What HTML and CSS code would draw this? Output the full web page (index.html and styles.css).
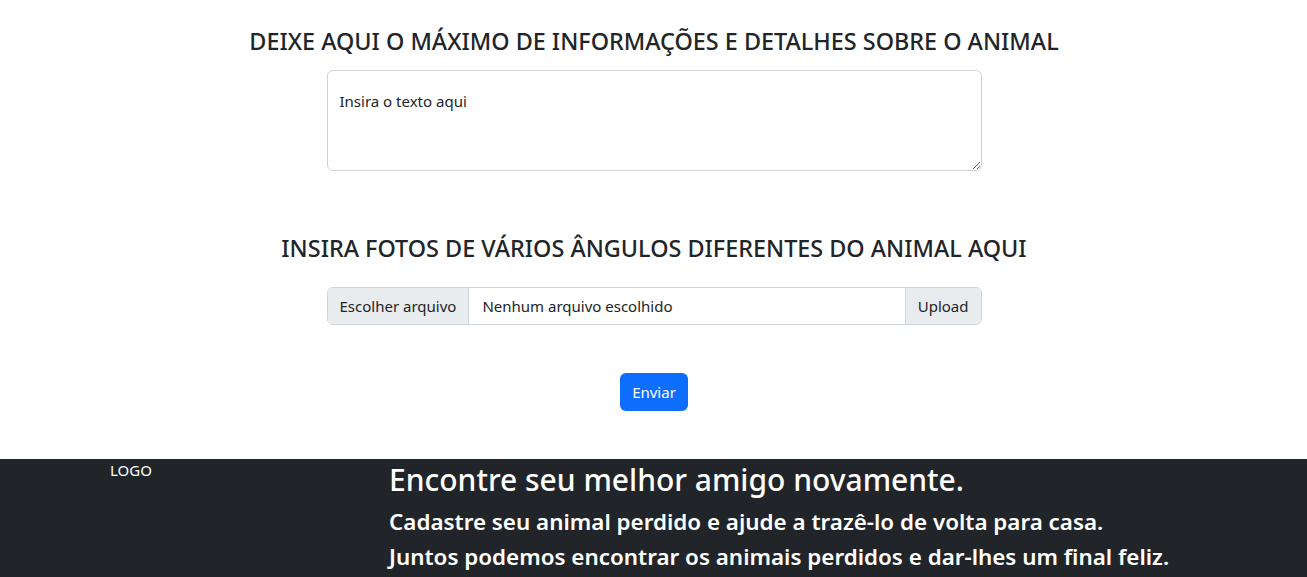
FILE: index.html
```html
<!DOCTYPE html>
<html lang="pt-BR">
<head>
<meta charset="utf-8">
<title>Cadastro de animal</title>
<link rel="stylesheet" href="styles.css">
</head>
<body>
<main class="content">
  <section class="block block-details">
    <h4 class="section-title">DEIXE AQUI O MÁXIMO DE INFORMAÇÕES E DETALHES SOBRE O ANIMAL</h4>
    <textarea class="details-input">Insira o texto aqui</textarea>
  </section>
  <section class="block block-photos">
    <h4 class="section-title">INSIRA FOTOS DE VÁRIOS ÂNGULOS DIFERENTES DO ANIMAL AQUI</h4>
    <div class="input-group">
      <span class="file-btn">Escolher arquivo</span>
      <span class="file-name">Nenhum arquivo escolhido</span>
      <span class="upload-btn">Upload</span>
    </div>
  </section>
  <div class="submit-row">
    <button class="btn-submit" type="button">Enviar</button>
  </div>
</main>
<footer class="site-footer">
  <div class="footer-logo">LOGO</div>
  <div class="footer-text">
    <h2 class="footer-title">Encontre seu melhor amigo novamente.</h2>
    <p class="footer-line">Cadastre seu animal perdido e ajude a trazê-lo de volta para casa.</p>
    <p class="footer-line">Juntos podemos encontrar os animais perdidos e dar-lhes um final feliz.</p>
  </div>
</footer>
</body>
</html>
```

FILE: styles.css
```css
* { box-sizing: border-box; }
html, body { margin: 0; padding: 0; }
body {
  font-family: "Noto Sans", "Open Sans", sans-serif;
  color: #212529;
  background: #fff;
  font-size: 15px;
  line-height: 1.5;
}
.content {
  padding: 27px 0 0 1px;
  text-align: center;
}
.section-title {
  margin: 0 0 15px;
  font-size: 23.4px;
  font-weight: 500;
  line-height: 1.2;
}
.details-input {
  display: block;
  width: 655px;
  height: 101px;
  margin: 0 auto;
  padding: 18px 12px 6px;
  border: 1px solid #ced4da;
  border-radius: 6px;
  font-family: inherit;
  font-size: 15px;
  line-height: 1.6;
  color: #212529;
  resize: vertical;
}
.block-photos { margin-top: 63px; }
.block-photos .section-title { margin-bottom: 25px; }
.input-group {
  display: flex;
  width: 655px;
  height: 38px;
  margin: 0 auto;
  border: 1px solid #ced4da;
  border-radius: 6px;
  overflow: hidden;
  font-size: 15px;
}
.file-btn, .upload-btn {
  display: flex;
  align-items: center;
  background: #e9ecef;
  padding: 0 12px;
}
.file-btn { border-right: 1px solid #ced4da; }
.upload-btn { border-left: 1px solid #ced4da; }
.file-name {
  flex: 1;
  display: flex;
  align-items: center;
  padding: 0 13px;
  text-align: left;
}
.submit-row { margin-top: 48px; padding-bottom: 48px; }
.btn-submit {
  height: 38px;
  padding: 0 12px;
  border: 0;
  border-radius: 6px;
  background: #0d6efd;
  color: #fff;
  font-family: inherit;
  font-size: 15px;
}
.site-footer {
  display: flex;
  background: #212529;
  color: #fff;
  padding: 0 0 20px 110px;
  min-height: 140px;
}
.footer-logo {
  width: 279px;
  font-size: 15px;
  padding-top: 0;
}
.footer-text { padding-top: 3px; }
.footer-title {
  margin: 0 0 6px;
  font-size: 30px;
  font-weight: 500;
  line-height: 1.2;
}
.footer-line {
  margin: 0;
  font-size: 22.4px;
  font-weight: 600;
  line-height: 35px;
}
```
